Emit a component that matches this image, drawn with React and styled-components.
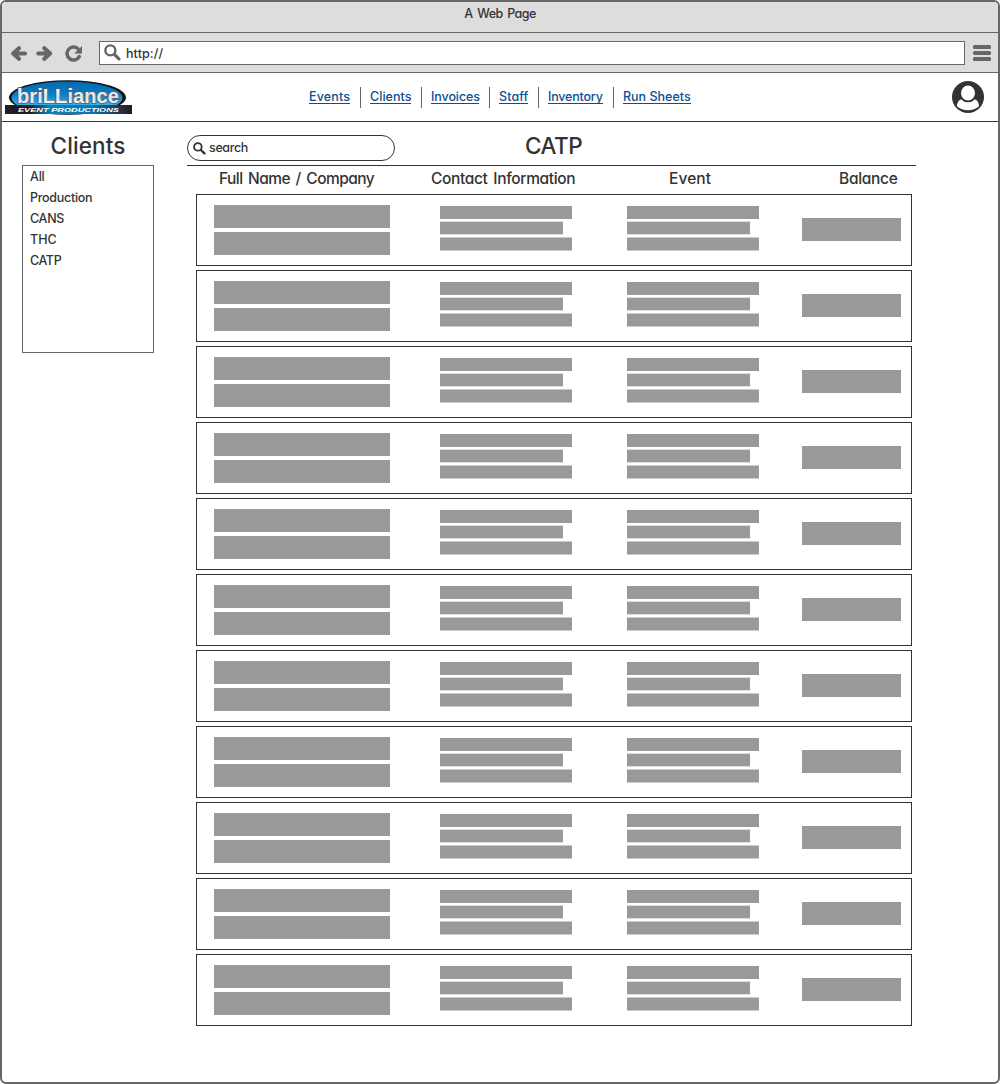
import React from "react";
import styled, { createGlobalStyle } from "styled-components";

const Global = createGlobalStyle`
  *, *::before, *::after { box-sizing: border-box; }
  body {
    margin: 0;
    background: #fff;
    color: #333;
    font-family: Inter, "Liberation Sans", sans-serif;
    font-feature-settings: "cv11" 1;
    font-size: 12.5px;
    font-weight: 500;
  }
`;

const Window = styled.div`
  width: 1000px;
  height: 1084px;
  border: 2px solid #666;
  border-radius: 6px;
  overflow: hidden;
  display: flex;
  flex-direction: column;
`;

const TitleBar = styled.div`
  height: 31px;
  flex: none;
  padding-top: 3px;
  background: #ddd;
  border-bottom: 1px solid #666;
  text-align: center;
  line-height: 17px;
  letter-spacing: -0.6px;
  word-spacing: 2px;
`;

const Toolbar = styled.div`
  height: 40px;
  flex: none;
  display: flex;
  align-items: center;
  padding: 0 7px 0 8px;
  background: #ddd;
  border-bottom: 1px solid #666;
`;

const ToolIcons = styled.svg`
  display: block;
  width: 89px;
  height: 38px;
  flex: none;
`;

const Address = styled.div`
  width: 866px;
  height: 24px;
  display: flex;
  align-items: center;
  gap: 5px;
  padding-left: 4px;
  margin-right: 8px;
  background: #fff;
  border: 1px solid #666;
`;

const MenuIcon = styled.div`
  width: 18px;
  display: grid;
  gap: 2px;
`;

const MenuBar = styled.span`
  height: 4px;
  border-radius: 1.5px;
  background: #666;
`;

const Header = styled.header`
  height: 49px;
  flex: none;
  display: flex;
  border-bottom: 1px solid #333;
`;

const LogoSvg = styled.svg`
  display: block;
  width: 128px;
  height: 36px;
  margin: 7px 0 0 3px;
`;

const Nav = styled.nav`
  display: flex;
  margin: 14px 0 0 166px;
  height: 21px;
`;

const NavItem = styled.div`
  padding: 2px 10px 0 9px;
  border-right: 1px solid #666;
  &:first-child { padding-left: 10px; }
  &:last-child { border-right: 0; }
`;

const NavLink = styled.a`
  display: block;
  width: ${(p) => p.$width}px;
  height: 15px;
  line-height: 16px;
  white-space: nowrap;
  color: #0b4f91;
  letter-spacing: ${(p) => p.$tracking || 0}px;
  border-bottom: 1px solid #0b4f91;
`;

const Avatar = styled.svg`
  display: block;
  width: 32px;
  height: 32px;
  margin: 8px 14px 0 auto;
`;

const Body = styled.div`
  display: flex;
  padding-left: 20px;
`;

const Sidebar = styled.aside`
  width: 132px;
  margin-right: 33px;
`;

const Heading = styled.h1`
  margin: 0;
  font-size: 22.5px;
  font-weight: 500;
  line-height: 28px;
  letter-spacing: ${(p) => p.$tracking || 0}px;
`;

const SidebarTitle = styled(Heading)`
  height: 43px;
  padding-top: 10px;
  text-align: center;
`;

const ClientList = styled.ul`
  height: 188px;
  margin: 0;
  padding: 0 7px;
  list-style: none;
  border: 1px solid #666;
`;

const ClientItem = styled.li`
  height: 21px;
  line-height: 21px;
  letter-spacing: ${(p) => p.$tracking || 0}px;
`;

const Main = styled.main`
  width: 729px;
`;

const MainTop = styled.div`
  height: 44px;
  display: flex;
  border-bottom: 1px solid #333;
`;

const Search = styled.div`
  width: 208px;
  height: 26px;
  margin: 13px 130px 0 0;
  display: flex;
  align-items: center;
  gap: 3px;
  padding: 0 0 0 5px;
  border: 1px solid #333;
  border-radius: 13px;
`;

const PageTitle = styled(Heading)`
  padding-top: 10px;
`;

const Label = styled.span`
  letter-spacing: ${(p) => p.$tracking || 0}px;
  padding-top: ${(p) => p.$drop || 0}px;
  padding-bottom: ${(p) => p.$lift || 0}px;
`;

const Columns = styled.div`
  display: grid;
  grid-template-columns: 212px 238px 140px 102px;
  height: 28px;
  padding-left: 32px;
  font-size: 15.5px;
  line-height: 26px;
  word-spacing: 2px;
  white-space: nowrap;
`;

const Column = styled.div`
  letter-spacing: ${(p) => p.$tracking || 0}px;
  padding-left: ${(p) => p.$indent || 0}px;
`;

const Rows = styled.div`
  display: grid;
  gap: 4px;
  padding: 0 4px 0 9px;
`;

const Row = styled.div`
  height: 72px;
  display: grid;
  grid-template-columns: 226px 187px 175px 99px;
  padding-left: 17px;
  border: 1px solid #333;
`;

const NameCell = styled.div`
  display: grid;
  grid-auto-rows: 23px;
  gap: 4px;
  width: 176px;
  padding-top: 10px;
`;

const Block = styled.div`
  background: #999;
`;

const LinesCell = styled.div`
  display: flex;
  flex-direction: column;
  gap: 2px;
  padding-top: 11px;
`;

const Line = styled.div`
  width: ${(p) => p.$width}px;
  height: ${(p) => p.$height}px;
  background: #999;
  border-style: solid;
  border-width: ${(p) => (p.$edge ? "1px 0" : "0")};
  border-color: ${(p) => p.$edge || "#999"};
`;

const BalanceCell = styled.div`
  height: 46px;
  padding-top: 23px;
  display: grid;
`;

function Browse() {
  return (
    <ToolIcons viewBox="10 33 89 38" fill="none" stroke="#666">
      <path d="M25 52.5H15M19 47.2L13.2 52.5L19 57.8" strokeWidth="4.2" strokeLinecap="round" strokeLinejoin="round" />
      <path d="M38.3 52.5H48.3M44.3 47.2L50.1 52.5L44.3 57.8" strokeWidth="4.2" strokeLinecap="round" strokeLinejoin="round" />
      <path d="M78 47.8A6.5 6.5 0 1 0 79.3 55.6" strokeWidth="3.4" strokeLinecap="round" />
      <path d="M82 45V52.5H74.2Z" fill="#666" stroke="none" />
    </ToolIcons>
  );
}

function Magnifier({ size, color, stroke }) {
  return (
    <svg width={size} height={size} viewBox="0 0 16 16" fill="none" stroke={color} strokeWidth={stroke}>
      <circle cx="6" cy="6" r="4.7" />
      <path d="M9.8 9.8L14 14" strokeLinecap="round" strokeWidth={stroke + 0.7} />
    </svg>
  );
}

function Logo() {
  return (
    <LogoSvg viewBox="5 80 128 36">
      <defs>
        <linearGradient id="sky" x1="0" y1="0" x2="0" y2="1">
          <stop offset="0" stopColor="#0569ae" />
          <stop offset="0.4" stopColor="#087fc4" />
          <stop offset="0.75" stopColor="#35b8ee" />
          <stop offset="1" stopColor="#0a9de0" />
        </linearGradient>
        <linearGradient id="band" x1="0" y1="0" x2="1" y2="0">
          <stop offset="0" stopColor="#211d22" />
          <stop offset="0.2" stopColor="#211d22" />
          <stop offset="0.35" stopColor="#0783bd" />
          <stop offset="0.68" stopColor="#0877b5" />
          <stop offset="0.95" stopColor="#2b252c" />
          <stop offset="1" stopColor="#211d22" />
        </linearGradient>
        <linearGradient id="silver" x1="0" y1="0" x2="0" y2="1">
          <stop offset="0" stopColor="#ffffff" />
          <stop offset="0.55" stopColor="#dfe4eb" />
          <stop offset="1" stopColor="#ffffff" />
        </linearGradient>
      </defs>
      <ellipse cx="67.5" cy="97.5" rx="58.5" ry="17.3" fill="#111" />
      <ellipse cx="67" cy="97.7" rx="55.5" ry="16.3" fill="url(#sky)" />
      <rect x="5" y="105" width="127" height="9" fill="url(#band)" />
      <g fontFamily="Liberation Sans, sans-serif" fontWeight="bold">
        <text x="17" y="103" fontSize="19.5" textLength="102" lengthAdjust="spacingAndGlyphs" fill="url(#silver)" stroke="#53606f" strokeWidth="1.6" style={{ paintOrder: "stroke" }}>briLLiance</text>
        <text x="18" y="111.5" fontSize="5" fontStyle="italic" textLength="101" lengthAdjust="spacingAndGlyphs" fill="#fff">EVENT PRODUCTIONS</text>
      </g>
    </LogoSvg>
  );
}

const links = [
  ["Events", 41, 0.15],
  ["Clients", 41, 0.05],
  ["Invoices", 48, -0.1],
  ["Staff", 29, 0.1],
  ["Inventory", 55, -0.2],
  ["Run Sheets", 68, 0],
];

const clients = [
  ["All", -0.2],
  ["Production", -0.28],
  ["CANS", -0.3],
  ["THC", 0],
  ["CATP", -0.4],
];

function Lines() {
  return (
    <LinesCell>
      <Line $width={132} $height={13} />
      <Line $width={123} $height={14} $edge="#dcdcdc #adadad" />
      <Line $width={132} $height={14} $edge="#cbcbcb" />
    </LinesCell>
  );
}

export default function App() {
  return (
    <>
      <Global />
      <Window>
        <TitleBar>A Web Page</TitleBar>
        <Toolbar>
          <Browse />
          <Address>
            <Magnifier size={17} color="#666" stroke={2.3} />
            <Label $tracking={0.1} $drop={1}>http://</Label>
          </Address>
          <MenuIcon>
            <MenuBar />
            <MenuBar />
            <MenuBar />
          </MenuIcon>
        </Toolbar>
        <Header>
          <Logo />
          <Nav>
            {links.map(([text, width, tracking]) => (
              <NavItem key={text}>
                <NavLink $width={width} $tracking={tracking}>{text}</NavLink>
              </NavItem>
            ))}
          </Nav>
          <Avatar viewBox="0 0 32 32">
            <circle cx="16" cy="16" r="16" fill="#333" />
            <ellipse cx="16" cy="12" rx="7" ry="7.5" fill="#fff" />
            <path d="M5 25.3C5 21.5 7 18.4 10 18.2C13.5 21.5 18.5 21.5 22 18.2C25 18.4 27 21.5 27 25.3C21.5 30.7 10.5 30.7 5 25.3Z" fill="#fff" />
            <path d="M9.8 18C13 21.6 19 21.6 22.2 18" fill="none" stroke="#333" strokeWidth="1.2" />
          </Avatar>
        </Header>
        <Body>
          <Sidebar>
            <SidebarTitle $tracking={0.1}>Clients</SidebarTitle>
            <ClientList>
              {clients.map(([name, tracking]) => (
                <ClientItem key={name} $tracking={tracking}>{name}</ClientItem>
              ))}
            </ClientList>
          </Sidebar>
          <Main>
            <MainTop>
              <Search>
                <Magnifier size={13} color="#333" stroke={2.2} />
                <Label $tracking={-0.35} $lift={1}>search</Label>
              </Search>
              <PageTitle $tracking={-0.5}>CATP</PageTitle>
            </MainTop>
            <Columns>
              <Column $tracking={-0.56}>Full Name / Company</Column>
              <Column $tracking={-0.35}>Contact Information</Column>
              <Column $tracking={0.1}>Event</Column>
              <Column $indent={30} $tracking={-0.3}>Balance</Column>
            </Columns>
            <Rows>
              {Array.from({ length: 11 }, (_, i) => (
                <Row key={i}>
                  <NameCell>
                    <Block />
                    <Block />
                  </NameCell>
                  <Lines />
                  <Lines />
                  <BalanceCell>
                    <Block />
                  </BalanceCell>
                </Row>
              ))}
            </Rows>
          </Main>
        </Body>
      </Window>
    </>
  );
}
